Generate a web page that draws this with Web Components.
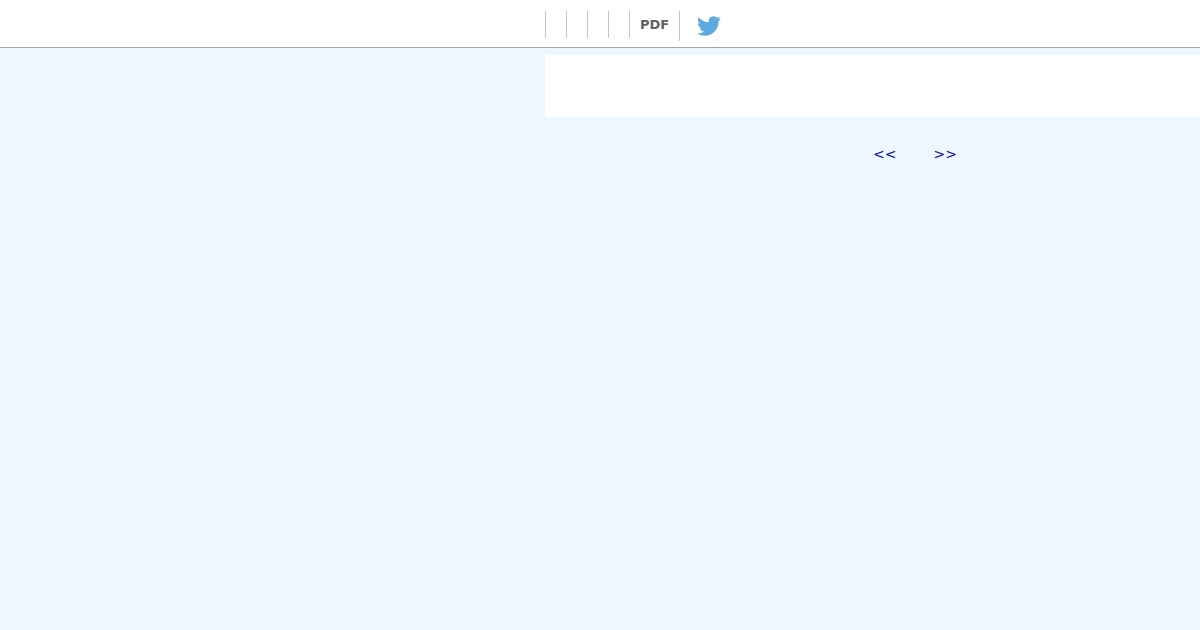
<!DOCTYPE html>
<html lang="en">
<head>
<meta charset="utf-8">
<meta name="viewport" content="width=device-width, initial-scale=1">
<title>PDF</title>
<style>
  body {
    --columns: 109fr 131fr;
    margin: 0;
    background: #ecf7ff;
    font-family: "DejaVu Sans", Verdana, sans-serif;
    overflow-x: hidden;
  }
</style>
</head>
<body>
<site-header>
  <menu-item></menu-item>
  <menu-item></menu-item>
  <menu-item></menu-item>
  <menu-item></menu-item>
  <menu-item><a href="#pdf">PDF</a></menu-item>
  <twitter-link></twitter-link>
</site-header>
<page-layout>
  <title-panel></title-panel>
  <page-pager></page-pager>
</page-layout>

<script>
class SiteHeader extends HTMLElement {
  connectedCallback() {
    this.attachShadow({ mode: 'open' });
    this.shadowRoot.innerHTML = `
      <style>
        :host {
          display: grid;
          grid-template-columns: var(--columns);
          background: #fff;
          border-bottom: 1px solid #a4a6a8;
        }
        nav {
          grid-column: 2;
          display: flex;
          align-items: flex-start;
          padding: 11px 0 6px;
        }
      </style>
      <nav><slot></slot></nav>
    `;
  }
}

class MenuItem extends HTMLElement {
  connectedCallback() {
    this.attachShadow({ mode: 'open' });
    this.shadowRoot.innerHTML = `
      <style>
        :host {
          display: block;
          min-height: 27px;
          padding: 0 10px;
          border-left: 1px solid #c4c4c4;
          font-size: 13px;
          line-height: 27px;
          font-weight: bold;
        }
        ::slotted(a) {
          color: #606060;
          text-decoration: none;
        }
      </style>
      <slot></slot>
    `;
  }
}

class TwitterLink extends HTMLElement {
  connectedCallback() {
    this.attachShadow({ mode: 'open' });
    this.shadowRoot.innerHTML = `
      <style>
        :host {
          display: block;
          border-left: 1px solid #c4c4c4;
          padding: 3px 17px;
        }
        a {
          display: block;
          color: #5ea9dd;
        }
        svg {
          display: block;
          fill: currentColor;
        }
      </style>
      <a href="#twitter" aria-label="Twitter">
        <svg width="24" height="24" viewBox="0 0 24 24" aria-hidden="true">
          <path d="M23.953 4.57a10 10 0 0 1-2.825.775 4.958 4.958 0 0 0 2.163-2.723c-.951.555-2.005.959-3.127 1.184a4.92 4.92 0 0 0-8.384 4.482C7.69 8.095 4.067 6.13 1.64 3.162a4.822 4.822 0 0 0-.666 2.475c0 1.71.87 3.213 2.188 4.096a4.904 4.904 0 0 1-2.228-.616v.06a4.923 4.923 0 0 0 3.946 4.827 4.996 4.996 0 0 1-2.212.085 4.936 4.936 0 0 0 4.604 3.417 9.867 9.867 0 0 1-6.102 2.105c-.39 0-.779-.023-1.17-.067a13.995 13.995 0 0 0 7.557 2.209c9.053 0 13.998-7.496 13.998-13.985 0-.21 0-.42-.015-.63A9.935 9.935 0 0 0 24 4.59z"/>
        </svg>
      </a>
    `;
  }
}

class PageLayout extends HTMLElement {
  connectedCallback() {
    this.attachShadow({ mode: 'open' });
    this.shadowRoot.innerHTML = `
      <style>
        :host {
          display: grid;
          grid-template-columns: var(--columns);
          padding-top: 7px;
        }
        main {
          grid-column: 2;
          min-width: 0;
          overflow: hidden;
        }
      </style>
      <main><slot></slot></main>
    `;
  }
}

class TitlePanel extends HTMLElement {
  connectedCallback() {
    this.attachShadow({ mode: 'open' });
    this.shadowRoot.innerHTML = `
      <style>
        :host {
          display: block;
          min-width: 740px;
          min-height: 62px;
          background: #fff;
        }
      </style>
      <slot></slot>
    `;
  }
}

class PagePager extends HTMLElement {
  connectedCallback() {
    this.attachShadow({ mode: 'open' });
    this.shadowRoot.innerHTML = `
      <style>
        :host {
          display: block;
          min-width: 740px;
          padding: 28px 0;
        }
        nav {
          display: flex;
          justify-content: center;
          gap: 37px;
          font-size: 14px;
          line-height: 18px;
        }
        a {
          color: #0a0aa0;
          text-decoration: none;
        }
      </style>
      <nav>
        <a href="#prev">&lt;&lt;</a>
        <a href="#next">&gt;&gt;</a>
      </nav>
    `;
  }
}

customElements.define('site-header', SiteHeader);
customElements.define('menu-item', MenuItem);
customElements.define('twitter-link', TwitterLink);
customElements.define('page-layout', PageLayout);
customElements.define('title-panel', TitlePanel);
customElements.define('page-pager', PagePager);
</script>
</body>
</html>
